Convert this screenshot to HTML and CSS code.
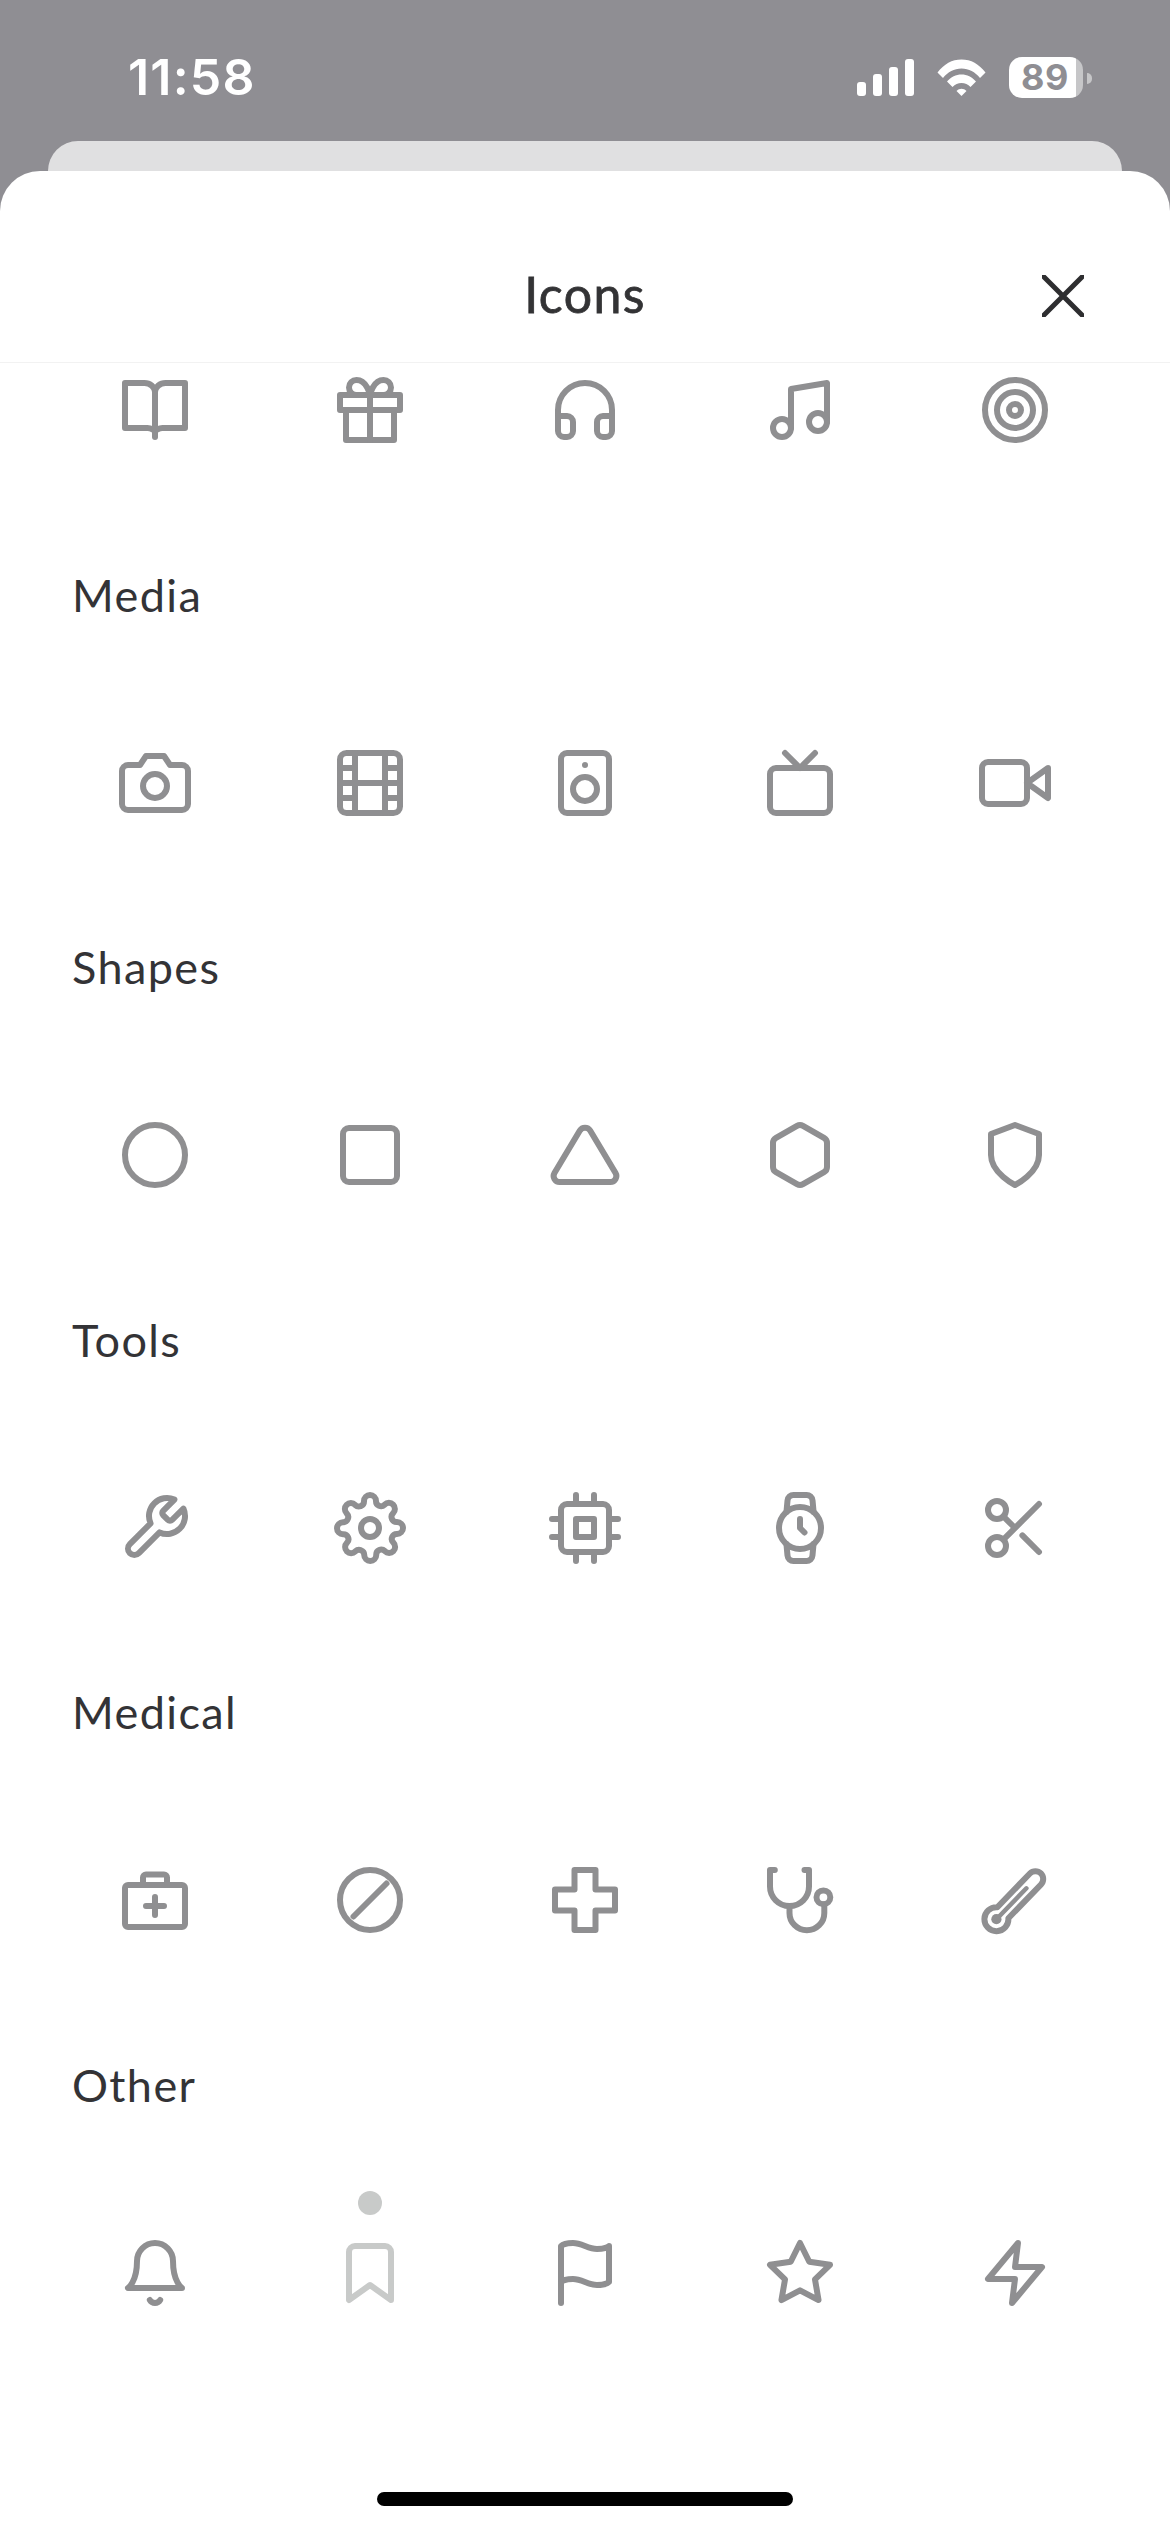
FILE: index.html
```html
<!DOCTYPE html>
<html lang="en">
<head>
<meta charset="utf-8">
<title>Icons</title>
<link rel="stylesheet" href="styles.css">
</head>
<body>
<div class="phone">
  <div class="status">
    <span class="time">11:58</span>
    <div class="status-icons">
      <div class="signal"><i class="b1"></i><i class="b2"></i><i class="b3"></i><i class="b4"></i></div>
      <svg class="wifi" viewBox="0 0 49 37"><path d="M0.5 13.5C7 5 15 0.5 24.5 0.5S42 5 48.5 13.5l-5.5 5.5C38 13 32 9.5 24.5 9.5S11 13 6 19z"/><path d="M10 22.5C14 18 19 15.5 24.5 15.5S35 18 39 22.5l-5.5 5.5C31 25.500 28 24 24.500 24S18 25.500 15.500 28z"/><path d="M19.500 32C21 30.500 22.700 29.800 24.500 29.800S28 30.500 29.500 32L24.500 37z"/></svg>
      <div class="battery"><span class="level">89</span></div>
      <div class="nub"></div>
    </div>
  </div>
  <div class="back-card"></div>
  <div class="sheet">
    <header class="sheet-head">
      <h1 class="title">Icons</h1>
      <svg class="close" viewBox="0 0 42 42"><path d="M1 1l40 40M41 1L1 41"/></svg>
    </header>
    <div class="content">
      <div class="grid">
        <svg class="ic" viewBox="0 0 24 24"><path d="M2 3h6.500c1.800 0 3.500 1.300 3.500 3 0-1.700 1.700-3 3.500-3H22v15h-7.500c-1 0-2.500.6-2.500 1.500 0-.9-1.500-1.500-2.500-1.500H2z"/><path d="M12 6v15"/></svg>
        <svg class="ic" viewBox="0 0 24 24"><path d="M20 12v10H4V12"/><rect x="2" y="7" width="20" height="5"/><path d="M12 22V7"/><path d="M12 7H7.500a2.500 2.500 0 0 1 0-5C11 2 12 7 12 7z"/><path d="M12 7h4.500a2.500 2.500 0 0 0 0-5C13 2 12 7 12 7z"/></svg>
        <svg class="ic" viewBox="0 0 24 24"><path d="M3 18v-6a9 9 0 0 1 18 0v6"/><path d="M21 19a2 2 0 0 1-2 2h-1a2 2 0 0 1-2-2v-3a2 2 0 0 1 2-2h3z"/><path d="M3 19a2 2 0 0 0 2 2h1a2 2 0 0 0 2-2v-3a2 2 0 0 0-2-2H3z"/></svg>
        <svg class="ic" viewBox="0 0 24 24"><path d="M9 18V5l12-2v13"/><circle cx="6" cy="18" r="3"/><circle cx="18" cy="16" r="3"/></svg>
        <svg class="ic" viewBox="0 0 24 24"><circle cx="12" cy="12" r="10"/><circle cx="12" cy="12" r="6"/><circle cx="12" cy="12" r="2"/></svg>
      </div>

      <h2 class="label">Media</h2>
      <div class="grid">
        <svg class="ic" viewBox="0 0 24 24"><path d="M23 19a2 2 0 0 1-2 2H3a2 2 0 0 1-2-2V8a2 2 0 0 1 2-2h4l2-3h6l2 3h4a2 2 0 0 1 2 2z"/><circle cx="12" cy="13" r="4"/></svg>
        <svg class="ic" viewBox="0 0 24 24"><rect x="2" y="2" width="20" height="20" rx="2.180"/><path d="M7 2v20M17 2v20M2 12h20M2 7h5M2 17h5M17 17h5M17 7h5"/></svg>
        <svg class="ic" viewBox="0 0 24 24"><rect x="4" y="2" width="16" height="20" rx="2"/><circle cx="12" cy="14" r="4"/><path d="M12 6h.01"/></svg>
        <svg class="ic" viewBox="0 0 24 24"><rect x="2" y="7" width="20" height="15" rx="2"/><path d="M17 2l-5 5-5-5"/></svg>
        <svg class="ic" viewBox="0 0 24 24"><path d="M23 7l-7 5 7 5z"/><rect x="1" y="5" width="15" height="14" rx="2"/></svg>
      </div>

      <h2 class="label">Shapes</h2>
      <div class="grid">
        <svg class="ic" viewBox="0 0 24 24"><circle cx="12" cy="12" r="10"/></svg>
        <svg class="ic" viewBox="0 0 24 24"><rect x="3" y="3" width="18" height="18" rx="2"/></svg>
        <svg class="ic" viewBox="0 0 24 24"><path d="M10.290 3.860L1.820 18a2 2 0 0 0 1.710 3h16.940a2 2 0 0 0 1.710-3L13.710 3.860a2 2 0 0 0-3.420 0z"/></svg>
        <svg class="ic" viewBox="0 0 24 24"><path d="M21 16V8a2 2 0 0 0-1-1.730l-7-4a2 2 0 0 0-2 0l-7 4A2 2 0 0 0 3 8v8a2 2 0 0 0 1 1.730l7 4a2 2 0 0 0 2 0l7-4A2 2 0 0 0 21 16z"/></svg>
        <svg class="ic" viewBox="0 0 24 24"><path d="M12 22s8-4 8-10V5l-8-3-8 3v7c0 6 8 10 8 10z"/></svg>
      </div>

      <h2 class="label">Tools</h2>
      <div class="grid">
        <svg class="ic" viewBox="0 0 24 24"><path d="M14.700 6.300a1 1 0 0 0 0 1.400l1.600 1.600a1 1 0 0 0 1.400 0l3.770-3.770a6 6 0 0 1-7.940 7.940l-6.910 6.910a2.120 2.120 0 0 1-3-3l6.910-6.910a6 6 0 0 1 7.940-7.940l-3.760 3.760z"/></svg>
        <svg class="ic" viewBox="0 0 24 24"><circle cx="12" cy="12" r="3"/><path d="M19.400 15a1.650 1.650 0 0 0 .33 1.820l.06.06a2 2 0 0 1 0 2.830 2 2 0 0 1-2.830 0l-.06-.06a1.650 1.650 0 0 0-1.820-.33 1.650 1.650 0 0 0-1 1.510V21a2 2 0 0 1-2 2 2 2 0 0 1-2-2v-.09A1.650 1.650 0 0 0 9 19.400a1.650 1.650 0 0 0-1.820.33l-.06.06a2 2 0 0 1-2.830 0 2 2 0 0 1 0-2.830l.06-.06a1.650 1.650 0 0 0 .33-1.820 1.650 1.650 0 0 0-1.510-1H3a2 2 0 0 1-2-2 2 2 0 0 1 2-2h.09A1.650 1.650 0 0 0 4.600 9a1.650 1.650 0 0 0-.33-1.820l-.06-.06a2 2 0 0 1 0-2.830 2 2 0 0 1 2.830 0l.06.06a1.650 1.650 0 0 0 1.820.33H9a1.650 1.650 0 0 0 1-1.510V3a2 2 0 0 1 2-2 2 2 0 0 1 2 2v.09a1.650 1.650 0 0 0 1 1.510 1.650 1.650 0 0 0 1.820-.33l.06-.06a2 2 0 0 1 2.830 0 2 2 0 0 1 0 2.830l-.06.06a1.650 1.650 0 0 0-.33 1.820V9a1.650 1.650 0 0 0 1.510 1H21a2 2 0 0 1 2 2 2 2 0 0 1-2 2h-.09a1.650 1.650 0 0 0-1.510 1z"/></svg>
        <svg class="ic" viewBox="0 0 24 24"><rect x="4" y="4" width="16" height="16" rx="2"/><rect x="9" y="9" width="6" height="6"/><path d="M9 1v3M15 1v3M9 20v3M15 20v3M20 9h3M20 15h3M1 9h3M1 15h3"/></svg>
        <svg class="ic" viewBox="0 0 24 24"><circle cx="12" cy="12" r="7"/><path d="M12 9v3l1.500 1.500"/><path d="M16.510 17.350l-.35 3.830a2 2 0 0 1-2 1.820H9.830a2 2 0 0 1-2-1.820l-.35-3.830m.01-10.700l.35-3.830A2 2 0 0 1 9.830 1h4.350a2 2 0 0 1 2 1.820l.35 3.830"/></svg>
        <svg class="ic" viewBox="0 0 24 24"><circle cx="6" cy="6" r="3"/><circle cx="6" cy="18" r="3"/><path d="M20 4L8.120 15.880M14.470 14.480L20 20M8.120 8.120L12 12"/></svg>
      </div>

      <h2 class="label">Medical</h2>
      <div class="grid">
        <svg class="ic" viewBox="0 0 24 24"><rect x="2" y="7" width="20" height="14" rx="1"/><path d="M8 7V4.500a1 1 0 0 1 1-1h6a1 1 0 0 1 1 1V7M12 11v6M9 14h6"/></svg>
        <svg class="ic" viewBox="0 0 24 24"><circle cx="12" cy="12" r="10"/><path d="M6.500 17.500l11-11"/></svg>
        <svg class="ic" viewBox="0 0 24 24"><path d="M8.500 2h7v6.500H22v7h-6.500V22h-7v-6.500H2v-7h6.500z"/></svg>
        <svg class="ic" viewBox="0 0 24 24"><path d="M3.600 2H2v5.500a6.500 6.500 0 0 0 13 0V2h-1.500"/><path d="M8.500 14v2.300a5.800 5.800 0 0 0 11.600 0v-2.900"/><circle cx="19.800" cy="11.100" r="2.300"/></svg>
        <svg class="ic" viewBox="0 0 24 24"><path d="M6.110 14.410L16.960 3.160a2.600 2.600 0 0 1 3.680 3.680L9.790 18.090a4 4 0 1 1-3.680-3.680z"/><path class="mercury" d="M5.800 18.400L15.800 8.100"/><circle class="bulb" cx="5.800" cy="18.400" r="1.700"/></svg>
      </div>

      <h2 class="label">Other</h2>
      <div class="grid">
        <svg class="ic" viewBox="0 0 24 24"><path d="M18 8A6 6 0 0 0 6 8c0 7-3 9-3 9h18s-3-2-3-9"/><path d="M13.730 21a2 2 0 0 1-3.460 0"/></svg>
        <div class="cell">
          <span class="dot"></span>
          <svg class="ic faded" viewBox="0 0 24 24"><path d="M19 21l-7-5-7 5V5a2 2 0 0 1 2-2h10a2 2 0 0 1 2 2z"/></svg>
        </div>
        <svg class="ic" viewBox="0 0 24 24"><path d="M4 15s1-1 4-1 5 2 8 2 4-1 4-1V3s-1 1-4 1-5-2-8-2-4 1-4 1z"/><path d="M4 22v-7"/></svg>
        <svg class="ic" viewBox="0 0 24 24"><path d="M12 2l3.090 6.260L22 9.270l-5 4.870 1.180 6.880L12 17.770l-6.180 3.250L7 14.140 2 9.270l6.910-1.010z"/></svg>
        <svg class="ic" viewBox="0 0 24 24"><path d="M13 2L3 14h9l-1 8 10-12h-9z"/></svg>
      </div>
    </div>
    <div class="home"></div>
  </div>
</div>
</body>
</html>
```

FILE: styles.css
```css
* { box-sizing: border-box; }
html, body { margin: 0; padding: 0; }
body { background: #fff; }
.phone {
  width: 1170px;
  height: 2532px;
  overflow: hidden;
  background: #8f8e93;
  display: flex;
  flex-direction: column;
}
.status {
  height: 141px;
  flex: none;
  display: flex;
  justify-content: space-between;
  padding: 57px 78px 0 128px;
}
.time {
  font: 600 50px/41px Inter, "Liberation Sans", sans-serif;
  letter-spacing: 1.200px;
  color: #fff;
  height: 41px;
}
.status-icons { display: flex; align-items: flex-start; }
.signal {
  display: flex;
  align-items: flex-end;
  gap: 6.500px;
  height: 39px;
  margin-right: 23px;
}
.signal i { display: block; width: 9.500px; background: #fff; border-radius: 3px; }
.b1 { height: 14px; }
.b2 { height: 22px; }
.b3 { height: 29px; }
.b4 { height: 37px; }
.wifi { width: 49px; height: 37px; margin: 2px 23px 0 0; fill: #fff; }
.battery {
  width: 74px;
  height: 41px;
  border-radius: 13px;
  background: linear-gradient(90deg, #fff 0 67px, #c6c6c8 67px);
  display: flex;
  align-items: center;
  justify-content: center;
  padding-right: 2px;
}
.level { font: 700 36px/41px Inter, "Liberation Sans", sans-serif; letter-spacing: 0.500px; color: #8f8e93; }
.nub {
  width: 5px;
  height: 11px;
  margin: 16px 0 0 4px;
  background: #c6c6c8;
  border-radius: 0 5px 5px 0;
}
.back-card {
  height: 30px;
  flex: none;
  margin: 0 48px;
  background: #e0e0e1;
  border-radius: 30px 30px 0 0;
}
.sheet {
  flex: 1;
  min-height: 0;
  background: #fff;
  border-radius: 40px 40px 0 0;
  display: flex;
  flex-direction: column;
}
.sheet-head {
  height: 192px;
  flex: none;
  border-bottom: 1px solid #f2f2f2;
  position: relative;
  display: flex;
  align-items: center;
  justify-content: center;
  padding-top: 55px;
}
.title {
  margin: 0;
  font: 400 50px/70px Lato, "Noto Sans", sans-serif;
  -webkit-text-stroke: 0.8px #333335;
  color: #333335;
  letter-spacing: 1.400px;
}
.close {
  position: absolute;
  left: 1042px;
  top: 104px;
  width: 42px;
  height: 42px;
  fill: none;
  stroke: #2e2e30;
  stroke-width: 5px;
  stroke-linecap: round;
}
.content { flex: 1; padding-top: 11px; min-height: 0; }
.grid {
  display: grid;
  grid-template-columns: repeat(5, 1fr);
  justify-items: center;
  height: 72px;
  margin: 0 48px;
}
.label {
  margin: 118.500px 0 122.100px;
  padding-left: 72px;
  height: 60px;
  font: 400 45px/60px Lato, "Noto Sans", sans-serif;
  letter-spacing: 1.400px;
  color: #333336;
}
.ic {
  width: 72px;
  height: 72px;
  display: block;
  fill: none;
  stroke: #8f8f91;
  stroke-width: 2;
  stroke-linecap: round;
  stroke-linejoin: round;
}
.ic .mercury { stroke-width: 1.500; }
.ic .bulb { fill: #8f8f91; stroke: none; }
.ic.faded { stroke: #c8cac9; }
.cell { position: relative; width: 72px; height: 72px; }
.dot {
  position: absolute;
  left: 24px;
  top: -46px;
  width: 24px;
  height: 24px;
  border-radius: 50%;
  background: #c8cac9;
}
.home {
  flex: none;
  width: 416px;
  height: 14px;
  margin: 0 auto 26px;
  border-radius: 7px;
  background: #000;
}
```
